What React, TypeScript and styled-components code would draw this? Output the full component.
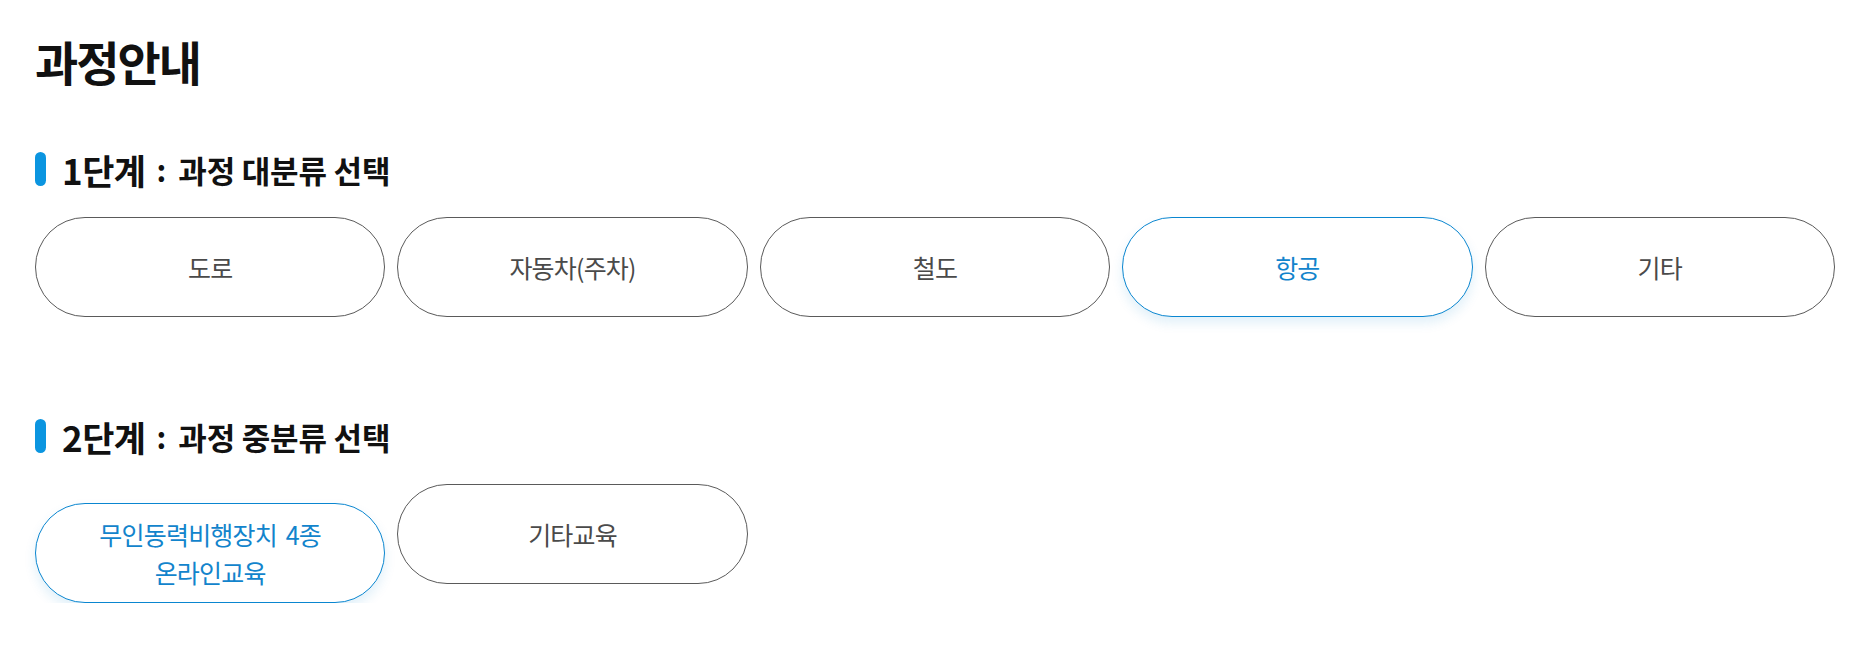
import React from "react";
import styled, { createGlobalStyle } from "styled-components";

const Global = createGlobalStyle`
  html, body { margin: 0; padding: 0; background: #fff; }
  body { font-family: "Noto Sans CJK KR", "Noto Sans", sans-serif; color: #111; }
  * { box-sizing: border-box; }
`;

const Page = styled.div`
  width: 1800px;
  margin-left: 35px;
  padding-top: 33px;
`;

const Title = styled.h1`
  margin: 0;
  font-size: 47px;
  line-height: 56px;
  font-weight: 700;
  letter-spacing: -2px;
  color: #111;
`;

const Section = styled.section<{ $top: number }>`
  margin-top: ${(p) => p.$top}px;
`;

const StepHeading = styled.h2`
  display: flex;
  align-items: center;
  margin: 0;
  height: 40px;
  font-weight: 700;
  color: #111;
  &::before {
    content: "";
    width: 11px;
    height: 34px;
    border-radius: 6px;
    background: #0b95e0;
    margin-right: 16px;
  }
`;

const StepNo = styled.span`
  font-size: 35px;
  letter-spacing: -0.5px;
  margin-right: 11px;
`;

const Colon = styled.span`
  font-size: 30px;
  margin-right: 12px;
`;

const StepDesc = styled.span`
  font-size: 31px;
  letter-spacing: -0.2px;
`;

const Row = styled.div`
  display: flex;
  align-items: baseline;
  gap: 12px;
  margin-top: 28px;
`;

const Choice = styled.button<{ $active?: boolean }>`
  flex: 0 0 calc((100% - 48px) / 5);
  height: 100px;
  display: flex;
  align-items: center;
  justify-content: center;
  text-align: center;
  border-radius: 50px;
  background: #fff;
  border: 1px solid ${(p) => (p.$active ? "#0a86d0" : "#5a5a5a")};
  color: ${(p) => (p.$active ? "#1284cc" : "#4a4a4a")};
  box-shadow: ${(p) => (p.$active ? "0 6px 12px rgba(10, 134, 208, 0.12)" : "none")};
  font-family: "Noto Sans CJK KR", "Noto Sans", sans-serif;
  font-size: 25px;
  font-weight: 400;
  line-height: 38px;
  letter-spacing: -0.8px;
  word-spacing: 4px;
  padding: 0 20px;
  cursor: pointer;
`;

const majors = ["도로", "자동차(주차)", "철도", "항공", "기타"];

export default function App() {
  return (
    <>
      <Global />
      <Page>
        <Title>과정안내</Title>
        <Section $top={60}>
          <StepHeading>
            <StepNo>1단계</StepNo>
            <Colon>:</Colon>
            <StepDesc>과정 대분류 선택</StepDesc>
          </StepHeading>
          <Row>
            {majors.map((m) => (
              <Choice key={m} $active={m === "항공"}>
                {m}
              </Choice>
            ))}
          </Row>
        </Section>
        <Section $top={99}>
          <StepHeading>
            <StepNo>2단계</StepNo>
            <Colon>:</Colon>
            <StepDesc>과정 중분류 선택</StepDesc>
          </StepHeading>
          <Row>
            <Choice $active>
              무인동력비행장치 4종
              <br />
              온라인교육
            </Choice>
            <Choice>기타교육</Choice>
          </Row>
        </Section>
      </Page>
    </>
  );
}
